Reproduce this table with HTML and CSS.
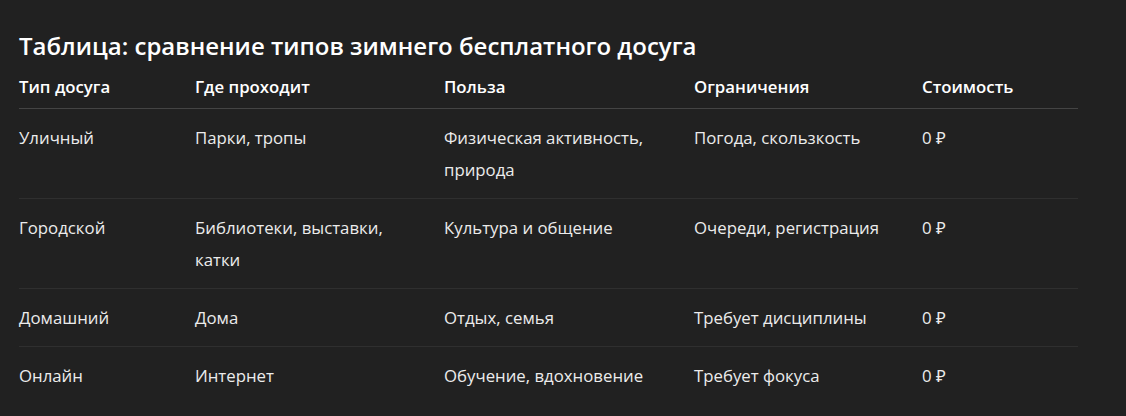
FILE: index.html
```html
<!DOCTYPE html>
<html lang="ru">
<head>
<meta charset="utf-8">
<link rel="stylesheet" href="styles.css">
</head>
<body>
<div class="page">
  <h3 class="title">Таблица: сравнение типов зимнего бесплатного досуга</h3>
  <table class="cmp">
    <colgroup>
      <col class="c1"><col class="c2"><col class="c3"><col class="c4"><col class="c5">
    </colgroup>
    <thead>
      <tr><th>Тип досуга</th><th>Где проходит</th><th>Польза</th><th>Ограничения</th><th>Стоимость</th></tr>
    </thead>
    <tbody>
      <tr><td>Уличный</td><td>Парки, тропы</td><td>Физическая активность, природа</td><td>Погода, скользкость</td><td>0 ₽</td></tr>
      <tr><td>Городской</td><td>Библиотеки, выставки, катки</td><td>Культура и общение</td><td>Очереди, регистрация</td><td>0 ₽</td></tr>
      <tr><td>Домашний</td><td>Дома</td><td>Отдых, семья</td><td>Требует дисциплины</td><td>0 ₽</td></tr>
      <tr><td>Онлайн</td><td>Интернет</td><td>Обучение, вдохновение</td><td>Требует фокуса</td><td>0 ₽</td></tr>
    </tbody>
  </table>
</div>
</body>
</html>
```
FILE: styles.css
```css
html, body {
  margin: 0;
  background: #212121;
}
body {
  font-family: "Open Sans", "Noto Sans", sans-serif;
  color: #ececec;
}
.page {
  padding: 30px 0 0 19px;
}
.title {
  margin: 0 0 5px 0;
  font-size: 24px;
  line-height: 32px;
  font-weight: 600;
  color: #ffffff;
}
.cmp {
  border-collapse: collapse;
  table-layout: fixed;
  width: 1059px;
  font-size: 16.8px;
}
.c1 { width: 176px; }
.c2 { width: 249px; }
.c3 { width: 250px; }
.c4 { width: 228px; }
.c5 { width: 156px; }
.cmp th {
  text-align: left;
  font-weight: 600;
  color: #ffffff;
  line-height: 24px;
  padding: 8px 16px 9px 0;
  border-bottom: 1px solid #444444;
}
.cmp td {
  vertical-align: top;
  line-height: 32px;
  padding: 13px 16px 12px 0;
  border-bottom: 1px solid #2f2f2f;
}
.cmp tbody tr:last-child td {
  border-bottom: none;
}
```
